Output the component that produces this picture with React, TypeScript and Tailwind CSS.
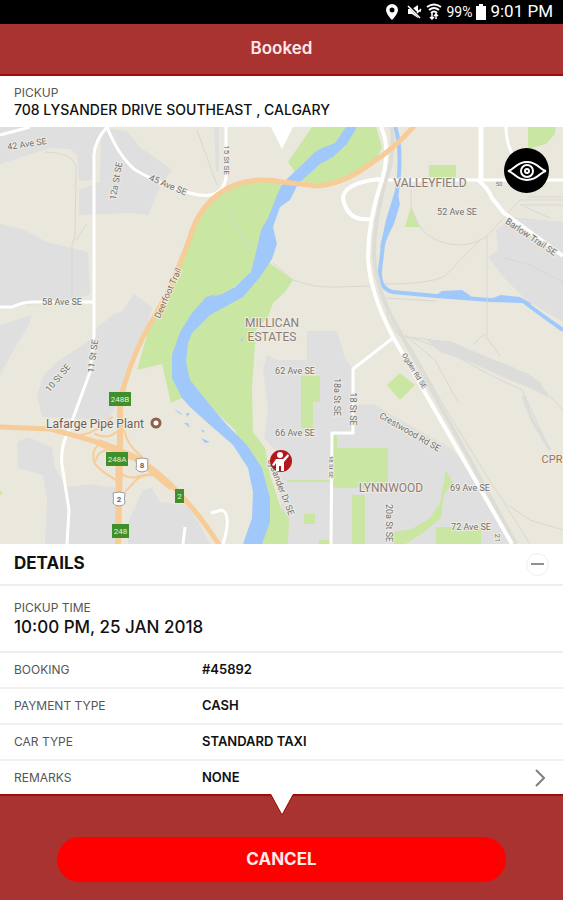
// Booked ride screen: pickup address, route map, booking details and cancel.

import React, { useState } from "react";

type DetailRow = {
  label: string;
  value: string;
  // Rows that open a further screen get a chevron.
  opens?: boolean;
};

const details: DetailRow[] = [
  { label: "BOOKING", value: "#45892" },
  { label: "PAYMENT TYPE", value: "CASH" },
  { label: "CAR TYPE", value: "STANDARD TAXI" },
  { label: "REMARKS", value: "NONE", opens: true },
];

type MapLabel = {
  text: string;
  x: number;
  y: number;
  angle?: number;
  size?: number;
  color?: string;
};

const streets: MapLabel[] = [
  { text: "42 Ave SE", x: 27, y: 144, angle: -9 },
  { text: "12a St SE", x: 116, y: 181, angle: -80 },
  { text: "45 Ave SE", x: 168, y: 185, angle: 23 },
  { text: "15 St SE", x: 226, y: 160, angle: 90, size: 8 },
  { text: "58 Ave SE", x: 62, y: 302 },
  { text: "Deerfoot Trail", x: 168, y: 293, angle: -66, size: 9, color: "#8a6a4c" },
  { text: "10 St SE", x: 58, y: 378, angle: -50 },
  { text: "11 St SE", x: 93, y: 356, angle: -82 },
  { text: "52 Ave SE", x: 457, y: 212 },
  { text: "50", x: 499, y: 183, size: 6 },
  { text: "Barlow Trail SE", x: 531, y: 237, angle: 34 },
  { text: "62 Ave SE", x: 295, y: 371 },
  { text: "66 Ave SE", x: 295, y: 433 },
  { text: "18a St SE", x: 337, y: 397, angle: 90 },
  { text: "18 St SE", x: 353, y: 409, angle: 90 },
  { text: "18 St SE", x: 331, y: 467, angle: 90, size: 6 },
  { text: "Lysander Dr SE", x: 281, y: 487, angle: 69 },
  { text: "Ogden Rd SE", x: 414, y: 371, angle: 58, size: 7 },
  { text: "Crestwood Rd SE", x: 410, y: 432, angle: 30 },
  { text: "69 Ave SE", x: 470, y: 488 },
  { text: "72 Ave SE", x: 471, y: 527 },
  { text: "20a St SE", x: 389, y: 523, angle: 90 },
  { text: "21", x: 497, y: 538, angle: 90, size: 8 },
];

const places: MapLabel[] = [
  { text: "VALLEYFIELD", x: 430, y: 183 },
  { text: "MILLICAN", x: 272, y: 323 },
  { text: "ESTATES", x: 272, y: 337 },
  { text: "LYNNWOOD", x: 391, y: 488 },
  { text: "CPR", x: 552, y: 459, size: 11, color: "#9a7350" },
];

const exits = [
  { text: "248B", x: 109, y: 392, w: 22 },
  { text: "248A", x: 106, y: 452, w: 22 },
  { text: "2", x: 175, y: 489, w: 9 },
  { text: "248", x: 112, y: 524, w: 17 },
];

function Label({ text, x, y, angle = 0, size = 9, color = "#707070" }: MapLabel) {
  return (
    <text
      transform={`translate(${x} ${y}) rotate(${angle})`}
      fontSize={size}
      fill={color}
      stroke="#efede6"
      strokeWidth="2"
      strokeLinejoin="round"
      paintOrder="stroke"
      textAnchor="middle"
      dominantBaseline="central"
    >
      {text}
    </text>
  );
}

function CityMap() {
  return (
    <svg
      viewBox="0 127 563 417"
      className="block h-auto w-full font-[Roboto,sans-serif]"
      role="img"
      aria-label="Pickup location map"
    >
      <rect y="127" width="563" height="417" fill="#eae8dd" />

      {/* built-up areas */}
      <g fill="#dfdfdf">
        <path d="M0 127H107L96 145 95 180 79 181 77 155 70 149 50 148 0 164Z" />
        <path d="M101 134 110 129 127 131 140 147 172 170 160 187 148 215 130 213 79 215V190L100 182Z" />
        <path d="M0 224 22 229 47 242 88 252 90 294 70 302 0 307Z" />
        <path d="M0 325 32 315 28 327 18 342 0 375Z" />
        <path d="M57 362 90 340 97 328 115 313 122 312 134 294 152 307 146 330 130 360 122 395 108 420 42 417 37 395 44 375Z" />
        <path d="M17 442 28 437 52 447 55 468 66 487 90 484 117 488 115 544H45L47 500 43 475 18 468Z" />
        <path d="M128 522 143 490 152 488 160 502 187 505 200 525 210 544H128Z" />
        <path d="M267 355 278 360 307 360V331H337L345 358 353 369 354 405 373 404 450 448 470 465 512 544H285L275 450 264 438 268 410 263 370Z" />
        <path d="M496 230 513 217 563 222V322L526 300 506 280 488 257 498 250Z" />
        <path d="M214 127H219V171L216 172Z" />
      </g>

      {/* parks */}
      <g fill="#c9e6a2">
        <path d="M281 184 257 180 230 187 210 200 197 220 190 240 176 275 150 325 137 370 162 364 171 403 182 398V340L205 308 250 275 262 240 283 195Z" />
        <path d="M312 127 288 162 293 169 300 181 330 186 350 177 375 162 382 147 376 127Z" />
        <path d="M268 262 293 280 285 292 273 303 268 317 256 330 255 345 252 388 253 432 265 448 270 475 281 508 289 518 288 544H250L258 480 235 430 182 380 185 325 240 290Z" />
        <path d="M301 376H320V402H313V428H301Z" />
        <path d="M333 435H337V448H388V488H333Z" />
        <path d="M352 495H365V544H352Z" />
        <path d="M304 514H315V524H304Z" />
        <path d="M287 480H332V482H287Z" />
        <path d="M319 540H331V544H319Z" />
        <path d="M400 373 415 385 400 400 387 385Z" />
        <path d="M446 470 453 483 444 494 441 518 423 533 405 544H393V532L412 529 430 518 440 503Z" />
        <path d="M436 527H481V544H436Z" />
        <path d="M429 165H456V177H429Z" />
        <path d="M411 207 420 227H405Z" />
        <path d="M528 127H556L555 134 546 144 528 149Z" />
        <path d="M0 491 3 492 0 496Z" />
      </g>

      {/* river and creek */}
      <g fill="#a1c8fb">
        <path d="M346 127 335 143 322 148 315 152 305 162 288 178 281 186 275 200 268 218 261 230 256 252 251 272 235 287 222 294 212 297 217 294 206 297 192 313 180 332 172 355V378L182 398 190 407 210 425 233 445 248 468 253 492 252 518 243 544H262L270 522V498L262 468 247 445 227 425 210 405 190 380 186 362 188 343 192 333 210 315 243 297 260 277 272 259 277 244 273 227 280 207 290 200 298 184 320 164 333 157 347 144 357 127Z" />
        <path d="M396 187 400 204 394 224 384 244 380 248 386 220Z" />
        <path d="M436 295 442 291 462 290 468 294 475 300Z" />
        <path d="M490 299 501 295 520 297 532 304Z" />
        <path d="M174 409 178 411 183 415 180 414ZM186 413H190L187 417ZM184 423H188L190 428ZM201 430H204V433ZM201 438 210 442 205 443ZM244 336 242 341 240 341Z" />
      </g>
      <path
        d="M395 127Q401 142 399 175L396 200 383 245 380 270Q379 289 393 292L436 296 490 300 523 301Q540 314 563 330"
        fill="none"
        stroke="#a1c8fb"
        strokeWidth="4"
      />

      {/* railways */}
      <g fill="none" stroke="#d8d7d1" strokeWidth="1">
        <path d="M45 152Q70 152 76 165L75 235 72 245V302M87 224 76 240" />
        <path d="M197 130 217 185M230 210 248 250M273 263 293 280Q315 288 335 287L370 286" />
        <path d="M411 190V207Q420 243 458 245Q478 245 490 233L520 200H563M487 236V336M480 240 445 276Q430 284 385 284M504 258 530 265 563 282" />
        <path d="M385 298 436 301M385 300 388 318 396 332 410 346 445 408 480 465 515 520 530 544" />
        <path d="M400 336 440 341 480 358 530 375 563 410M412 338 445 350 490 375 522 390 545 440M405 335 435 360 458 402M474 344 484 334 500 356M508 505 530 520 563 530" />
        <path d="M528 197H563M520 205H563M525 207 550 218" />
      </g>
      <path
        d="M427 340 450 341 480 354 515 368 540 382 549 398 530 388 505 378 470 362 440 352Z"
        fill="#dcdcda"
      />
      <path d="M523 396 532 420 550 450" fill="none" stroke="#dcdcda" strokeWidth="3" />

      {/* local roads */}
      <g fill="none" stroke="#fff" strokeWidth="3" strokeLinejoin="round">
        <path d="M0 135 30 127" />
        <path d="M107 127Q95 140 94 155V335L90 372 68 432Q60 448 62 465L69 510 67 544" />
        <path d="M107 127Q118 155 134 169Q152 181 190 193Q222 202 226 178V127" />
        <path d="M0 307H12Q22 302 35 302H94" />
        <path d="M380 179Q343 183 343 199Q348 222 370 219" strokeWidth="4" />
        <path d="M373 180H563" />
        <path d="M481 127V180" strokeWidth="5" />
        <path d="M506 127Q506 150 520 165" />
        <path d="M478 180Q488 188 492 198L504 213 563 256" strokeWidth="4" />
        <path d="M393 338 353 369V433H332L331 544" />
        <path d="M211 513 222 510Q232 515 223 544M185 527 183 544" />
      </g>
      <path
        d="M392 127Q395 155 386 180Q374 222 374 255Q376 292 400 332L516 544"
        fill="none"
        stroke="#dddcd6"
        strokeWidth="4"
      />
      <path
        d="M381 127Q391 148 382 180Q368 220 368 258Q370 293 393 337L512 544"
        fill="none"
        stroke="#fff"
        strokeWidth="4"
      />

      {/* highways */}
      <g fill="none" stroke="#f7cc98" strokeLinecap="round">
        <path
          d="M80 435Q97 433 112 417M95 434Q108 440 116 432M100 444Q90 450 95 464Q103 473 116 480M113 449Q98 450 96 460M124 430Q127 445 142 457M122 474Q130 480 139 476L150 474M126 491 138 478Q150 472 160 478"
          strokeWidth="2"
        />
        <path
          d="M414 126Q395 148 373 162Q345 184 317 186L283 182Q254 176 230 187Q200 202 190 237Q180 265 167 294L143 337Q127 370 120 402V430L118 468V546"
          strokeWidth="5"
        />
        <path d="M123 390 120 410V460L118 546" strokeWidth="6" />
        <path d="M-2 427 50 429 80 437 113 447 140 460Q180 485 220 546" strokeWidth="5" />
        <path d="M100 443 140 460 170 486" strokeWidth="7" />
      </g>

      {streets.map((s, i) => (
        <Label key={i} {...s} />
      ))}
      {places.map((p) => (
        <Label key={p.text} size={12} color="#8c7b73" {...p} />
      ))}
      <Label text="Lafarge Pipe Plant" x={95} y={424} size={12} color="#6f5f58" />
      <circle cx="156" cy="423" r="4" fill="#fff" stroke="#8f6048" strokeWidth="3" />

      {exits.map((e) => (
        <g key={e.text}>
          <rect x={e.x} y={e.y} width={e.w} height="14" fill="#3f8f2c" />
          <text
            x={e.x + e.w / 2}
            y={e.y + 7}
            fontSize="8"
            fill="#e4f3dc"
            textAnchor="middle"
            dominantBaseline="central"
          >
            {e.text}
          </text>
        </g>
      ))}

      {[
        { text: "8", x: 142, y: 465 },
        { text: "2", x: 119, y: 499 },
      ].map((r) => (
        <g key={r.text}>
          <path
            d={`M${r.x - 6} ${r.y - 6}q6 -2 12 0q-1 6 0 10q-2 3 -6 3q-4 0 -6 -3q1 -4 0 -10z`}
            fill="#fff"
            stroke="#9c9c9c"
            strokeLinejoin="round"
          />
          <text
            x={r.x}
            y={r.y}
            fontSize="8"
            fontWeight="700"
            fill="#666"
            textAnchor="middle"
            dominantBaseline="central"
          >
            {r.text}
          </text>
        </g>
      ))}

      {/* pickup pin: a person hailing a cab */}
      <g>
        <circle cx="281" cy="461" r="11" fill="#b3161b" />
        <circle cx="280" cy="455" r="3" fill="#fff" />
        <path
          d="M276 459H283L288 454 289 456 284 462V471H281V466H279V471H276V463L274 466 272 465Z"
          fill="#fff"
        />
      </g>
    </svg>
  );
}

function StatusBar() {
  return (
    <div className="flex h-6 items-center justify-end bg-black pr-[10px] font-[Roboto,sans-serif] text-white">
      <svg viewBox="0 0 14 18" className="mr-2 h-[18px] w-[14px]" aria-hidden="true">
        <path
          d="M7 1a6 6 0 0 0-6 6c0 4 6 10 6 10s6-6 6-10a6 6 0 0 0-6-6zm0 3.500a2.500 2.500 0 1 1 0 5 2.500 2.500 0 0 1 0-5z"
          fill="#fff"
          fillRule="evenodd"
        />
      </svg>
      <svg viewBox="0 0 15 16" className="mr-1 h-4 w-[15px]" aria-hidden="true">
        <path d="M1 5h4l6-4v13l-6-4H1z" fill="#fff" />
        <path d="M1 1 14 14" stroke="#000" strokeWidth="3" />
        <path d="M1 2 13 14M10 9l4-4M10 7h4" stroke="#fff" strokeWidth="1.500" />
      </svg>
      <svg viewBox="0 0 16 18" className="mr-1 h-[18px] w-4" fill="none" stroke="#fff" aria-hidden="true">
        <path d="M1 4q7-5 14 0M3 7q5-4 10 0M5 10q3-3 6 0" strokeWidth="2" />
        <path d="M6 10v6M10 10v6M4 14l2 2 2-2M8 13l2-2 2 2" strokeWidth="1.500" />
      </svg>
      <span className="mr-1 text-sm">99%</span>
      <svg viewBox="0 0 10 16" className="mr-1 h-4 w-[10px]" aria-hidden="true">
        <path d="M3 0h4v2h3v14H0V2h3z" fill="#fff" />
      </svg>
      <span className="text-[17px]">9:01 PM</span>
    </div>
  );
}

export default function App() {
  const [open, setOpen] = useState(true);

  return (
    <div className="flex min-h-screen flex-col bg-white font-[Inter,sans-serif] text-[#111]">
      <StatusBar />

      <header className="flex h-[52px] items-center justify-center border-b-2 border-[#9d0d0d] bg-[#a83330]">
        <h1 className="text-[17px] font-semibold text-[#ffe8e8]">Booked</h1>
      </header>

      <section className="flex h-[51px] flex-col justify-center px-[14px]">
        <h2 className="text-xs leading-4 text-[#555]">PICKUP</h2>
        <p className="text-sm font-medium leading-[18px]">
          708 LYSANDER DRIVE SOUTHEAST , CALGARY
        </p>
      </section>

      <section className="relative">
        <CityMap />
        <svg
          viewBox="0 0 22 22"
          className="absolute top-0 left-1/2 size-[22px] -translate-x-1/2"
          aria-hidden="true"
        >
          <path d="M0 0h22L11 22z" fill="#fff" />
        </svg>
        <button
          type="button"
          aria-label="Show driver view"
          className="absolute top-[21px] right-[14px] flex size-[45px] items-center justify-center rounded-full bg-black"
        >
          <svg viewBox="0 0 40 20" className="h-5 w-10" fill="none" stroke="#fff" aria-hidden="true">
            <path d="M1 10C7 9 9 1 20 1S33 9 39 10C33 11 31 19 20 19S7 11 1 10z" strokeWidth="2" />
            <circle cx="20" cy="10" r="6" strokeWidth="2" />
            <circle cx="20" cy="10" r="2" strokeWidth="2" />
          </svg>
        </button>
      </section>

      <section>
        <div className="flex h-[42px] items-center justify-between border-b-2 border-[#eee] px-[14px]">
          <h2 className="text-[17px] font-bold">DETAILS</h2>
          <button
            type="button"
            aria-label="Toggle details"
            aria-expanded={open}
            onClick={() => setOpen(!open)}
            className="flex size-[23px] items-center justify-center rounded-full border border-[#eee]"
          >
            <span className="h-0.5 w-[13px] bg-[#909090]" />
          </button>
        </div>

        {open && (
          <>
            <div className="flex h-[67px] flex-col justify-center border-b-2 border-[#eee] px-[14px]">
              <h3 className="text-xs leading-4 text-[#555]">PICKUP TIME</h3>
              <p className="text-[17px] font-medium leading-[22px]">10:00 PM, 25 JAN 2018</p>
            </div>
            <dl>
              {details.map((row) => (
                <div
                  key={row.label}
                  className="flex h-9 items-center border-b-2 border-[#f0f0f0] px-[14px] last:h-[33px] last:border-b-0"
                >
                  <dt className="w-[188px] text-xs text-[#555]">{row.label}</dt>
                  <dd className="flex flex-1 items-center justify-between text-[13px] font-semibold">
                    {row.value}
                    {row.opens && (
                      <button type="button" aria-label="Open remarks" className="mr-1">
                        <svg viewBox="0 0 10 18" className="h-[18px] w-[10px]" aria-hidden="true">
                          <path d="M1 1l8 8-8 8" fill="none" stroke="#808080" strokeWidth="2" />
                        </svg>
                      </button>
                    )}
                  </dd>
                </div>
              ))}
            </dl>
          </>
        )}
      </section>

      <footer className="relative flex-1 border-t-2 border-[#9d0d0d] bg-[#a83330] px-[57px] pt-[41px] pb-[18px]">
        <svg
          viewBox="0 0 24 22"
          className="absolute -top-0.5 left-1/2 h-[22px] w-6 -translate-x-1/2"
          aria-hidden="true"
        >
          <path d="M1 0h22L12 21z" fill="#fff" />
          <path d="M1 1l11 20L23 1" fill="none" stroke="#9d0d0d" />
        </svg>
        <button
          type="button"
          className="h-[45px] w-full rounded-full bg-[#ff0000] text-[17px] font-bold text-[#ffe8e8]"
        >
          CANCEL
        </button>
      </footer>
    </div>
  );
}
